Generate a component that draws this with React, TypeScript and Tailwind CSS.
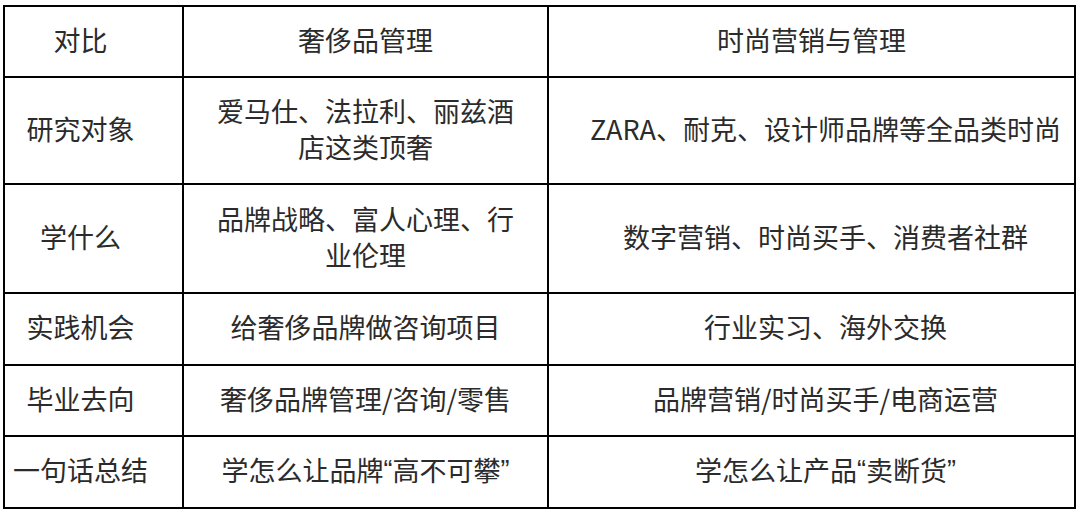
const Q = ({ children }: { children: string }) => (
  <span className="font-['Liberation_Sans',sans-serif]">{children}</span>
);

const rows: [string, React.ReactNode, React.ReactNode][] = [
  ["研究对象", "爱马仕、法拉利、丽兹酒店这类顶奢", "ZARA、耐克、设计师品牌等全品类时尚"],
  ["学什么", "品牌战略、富人心理、行业伦理", "数字营销、时尚买手、消费者社群"],
  ["实践机会", "给奢侈品牌做咨询项目", "行业实习、海外交换"],
  ["毕业去向", "奢侈品牌管理/咨询/零售", "品牌营销/时尚买手/电商运营"],
  [
    "一句话总结",
    <>学怎么让品牌<Q>“</Q>高不可攀<Q>”</Q></>,
    <>学怎么让产品<Q>“</Q>卖断货<Q>”</Q></>,
  ],
];

const heights = ["h-[105px]", "h-[107px]", "h-[70px]", "h-[69px]", "h-[70px]"];

export default function App() {
  return (
    <div className="h-[515px] w-[1080px] bg-white pl-[3px] pt-[5px] font-['Noto_Sans_CJK_SC',sans-serif] text-[27px] leading-[36px] text-[#2b2b2b]">
      <div className="grid w-[1073px] grid-cols-[177px_363px_525px] gap-[2px] bg-black p-[2px]">
        <div className="flex h-[69px] items-center justify-center bg-white pb-[4px] pr-[26px]">对比</div>
        <div className="flex items-center justify-center bg-white pb-[4px]">奢侈品管理</div>
        <div className="flex items-center justify-center bg-white pb-[4px]">时尚营销与管理</div>
        {rows.map(([a, b, c], i) => (
          <div key={a} className="contents">
            <div className={`flex items-center justify-center bg-white pb-[4px] pr-[26px] ${heights[i]}`}>{a}</div>
            <div className="flex items-center justify-center bg-white px-[30px] pb-[4px] text-center">{b}</div>
            <div className="flex items-center justify-center bg-white pb-[4px] pl-[28px] text-center">{c}</div>
          </div>
        ))}
      </div>
    </div>
  );
}
